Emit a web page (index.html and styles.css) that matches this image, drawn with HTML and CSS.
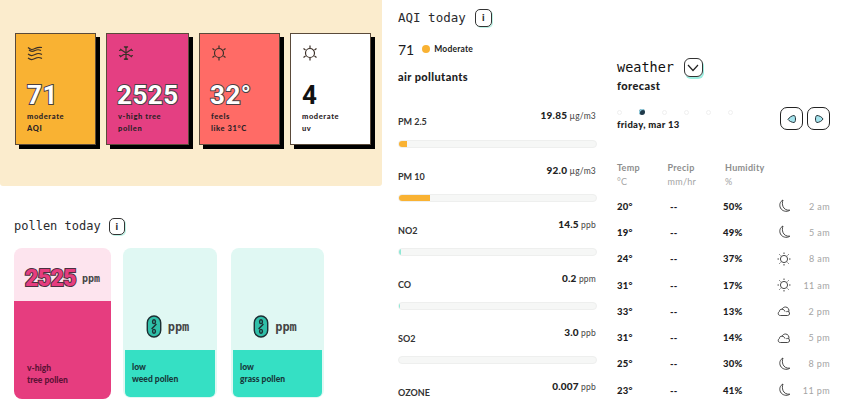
FILE: index.html
```html
<!DOCTYPE html>
<html lang="en">
<head>
    <meta charset="UTF-8">
    <meta name="viewport" content="width=device-width, initial-scale=1.0">
    <title>Air quality and weather</title>
    <link rel="stylesheet" href="styles.css">
</head>
<body>
    <svg class="defs" width="0" height="0">
        <symbol id="moon" viewBox="0 0 14 14"><path d="M6 1C3 2.500 2 6 3.500 9C5 12 9.500 13.500 12.800 11.200C9.500 11.500 7 10 6 7.500C5.200 5.500 5.200 3 6 1Z"/></symbol>
        <symbol id="sun" viewBox="0 0 14 14"><circle cx="7" cy="7" r="3.600"/><path d="M7 .5V2M7 12V13.500M.5 7H2M12 7H13.500M2.400 2.400L3.400 3.400M10.600 10.600L11.600 11.600M2.400 11.600L3.400 10.600M10.600 3.400L11.600 2.400"/></symbol>
        <symbol id="cloud" viewBox="0 0 14 14"><path d="M3.500 11.500H10.500C12.500 11.500 13.300 9 11.800 7.800C12.500 5.500 11 3 8.500 3C6.800 3 5.600 4 5 5.200C3.500 5 2.500 6 2.500 7.300C1 8 .3 11.500 3.500 11.500Z"/><path d="M5 5.200C6.500 5.300 7.800 6.300 8 7.600M11.800 7.800C11 7.300 10 7.300 9.300 7.700"/></symbol>
        <symbol id="tick" viewBox="0 0 16 24"><rect x="1" y="1" width="14" height="22" rx="7"/><path d="M5.500 14.500L10.500 9.500M8 5C6 5 6 9 8 9C10 9 10 5 8 5ZM8 15C6 15 6 19 8 19C10 19 10 15 8 15Z"/></symbol>
        <symbol id="sunny" viewBox="0 0 16 16"><path d="M3.500 8A4.500 4.500 0 1 0 12.500 8A4.500 4.500 0 1 0 3.500 8ZM8 .5V3M8 13V15.500M1.500 3.500L3.500 5M12.500 11L14.500 12.500M1.500 12.500L3.500 11M12.500 5L14.500 3.500"/></symbol>
    </svg>

    <div class="left">
        <section class="hero">
            <div class="stat yellow">
                <svg class="stat-icon" viewBox="0 0 16 16"><path d="M1 2.500C4 5 5 5 8 3.500C11 2 12 2 15 2.500M2 5C4 7 6 6.500 8 5.500C10 4.500 12 4.500 14 5.500M1 9C4 11 5 11 8 9.500C11 8 12 8 15 9.500M1 13C4 15 5 15 8 13.500C11 12 12 12 15 13.500"/></svg>
                <div class="stat-num outline">71</div>
                <div class="stat-txt">moderate<br>AQI</div>
            </div>
            <div class="stat pink wide">
                <svg class="stat-icon" viewBox="0 0 16 16"><path d="M8 1V15M2 4L14 12M2 12L14 4M8 3L6 1.500M8 3L10 1.500M8 13L6 14.500M8 13L10 14.500M3.500 5L1 5.500M12.500 11L15 10.500M3.500 11L1 10.500M12.500 5L15 5.500"/></svg>
                <div class="stat-num outline">2525</div>
                <div class="stat-txt">v-high tree<br>pollen</div>
            </div>
            <div class="stat coral">
                <svg class="stat-icon"><use href="#sunny"/></svg>
                <div class="stat-num outline">32°</div>
                <div class="stat-txt">feels<br>like 31°C</div>
            </div>
            <div class="stat white">
                <svg class="stat-icon"><use href="#sunny"/></svg>
                <div class="stat-num">4</div>
                <div class="stat-txt">moderate<br>uv</div>
            </div>
        </section>

        <section class="pollen">
            <h2 class="head">pollen today <span class="info">i</span></h2>
            <div class="pollen-cards">
                <div class="pcard tree">
                    <div class="pcard-top"><span class="pnum">2525</span> <span class="ppm small">ppm</span></div>
                    <div class="pcard-bottom">v-high<br>tree pollen</div>
                </div>
                <div class="pcard low">
                    <div class="pcard-top"><svg class="tick"><use href="#tick"/></svg><span class="ppm">ppm</span></div>
                    <div class="pcard-bottom">low<br>weed pollen</div>
                </div>
                <div class="pcard low">
                    <div class="pcard-top"><svg class="tick"><use href="#tick"/></svg><span class="ppm">ppm</span></div>
                    <div class="pcard-bottom">low<br>grass pollen</div>
                </div>
            </div>
        </section>
    </div>

    <section class="aqi">
        <h2 class="head big">AQI today <span class="info">i</span></h2>
        <div class="aqi-now"><span class="aqi-num">71</span><span class="dot"></span><span class="aqi-lbl">Moderate</span></div>
        <h3 class="sub">air pollutants</h3>

        <div class="row"><span class="name">PM 2.5</span><span class="val"><b>19.85</b> µg/m3</span></div>
        <div class="bar"><div class="fill" style="width: 4%"></div></div>
        <div class="row"><span class="name">PM 10</span><span class="val"><b>92.0</b> µg/m3</span></div>
        <div class="bar"><div class="fill" style="width: 15.500%"></div></div>
        <div class="row"><span class="name">NO2</span><span class="val"><b>14.5</b> ppb</span></div>
        <div class="bar"><div class="fill mint" style="width: 1%"></div></div>
        <div class="row"><span class="name">CO</span><span class="val"><b>0.2</b> ppm</span></div>
        <div class="bar"><div class="fill mint" style="width: 0.500%"></div></div>
        <div class="row"><span class="name">SO2</span><span class="val"><b>3.0</b> ppb</span></div>
        <div class="bar"></div>
        <div class="row"><span class="name">OZONE</span><span class="val"><b>0.007</b> ppb</span></div>
    </section>

    <section class="weather">
        <h2 class="head bigger">weather
            <span class="info chev"><svg viewBox="0 0 12 8"><path d="M1 1L6 6.500L11 1"/></svg></span>
        </h2>
        <h3 class="sub tight">forecast</h3>
        <div class="day-row">
            <div>
                <div class="dots"><i></i><i class="on"></i><i></i><i></i><i></i><i></i></div>
                <div class="date">friday, mar 13</div>
            </div>
            <div class="arrows">
                <span class="arrow"><svg viewBox="0 0 10 10"><path d="M1 5.500C2 3.500 5 1.500 7 1.500C9 1.500 9 8.500 7 8.500C5 8.500 2 7 1 5.500Z"/></svg></span>
                <span class="arrow"><svg viewBox="0 0 10 10"><path d="M9 5C8 3 5 1.500 3 1.500C1 1.500 1 8.500 3 8.500C5 8.500 8 7 9 5Z"/></svg></span>
            </div>
        </div>

        <div class="tr th"><span>Temp</span><span>Precip</span><span>Humidity</span></div>
        <div class="tr th unit"><span>°C</span><span>mm/hr</span><span>%</span></div>

        <div class="tr"><b>20°</b><b>--</b><b>50%</b><svg class="wi"><use href="#moon"/></svg><em>2 am</em></div>
        <div class="tr"><b>19°</b><b>--</b><b>49%</b><svg class="wi"><use href="#moon"/></svg><em>5 am</em></div>
        <div class="tr"><b>24°</b><b>--</b><b>37%</b><svg class="wi"><use href="#sun"/></svg><em>8 am</em></div>
        <div class="tr"><b>31°</b><b>--</b><b>17%</b><svg class="wi"><use href="#sun"/></svg><em>11 am</em></div>
        <div class="tr"><b>33°</b><b>--</b><b>13%</b><svg class="wi"><use href="#cloud"/></svg><em>2 pm</em></div>
        <div class="tr"><b>31°</b><b>--</b><b>14%</b><svg class="wi"><use href="#cloud"/></svg><em>5 pm</em></div>
        <div class="tr"><b>25°</b><b>--</b><b>30%</b><svg class="wi"><use href="#moon"/></svg><em>8 pm</em></div>
        <div class="tr"><b>23°</b><b>--</b><b>41%</b><svg class="wi"><use href="#moon"/></svg><em>11 pm</em></div>
    </section>
</body>
</html>
```

FILE: styles.css
```css
body {
    margin: 0;
    width: 847px;
    height: 407px;
    overflow: hidden;
    display: flex;
    background: #fff;
    color: #1c1c22;
    font-family: "Lato", "Liberation Sans", sans-serif;
}
.defs {
    position: absolute;
}
.left {
    width: 382px;
    flex-shrink: 0;
}

/* top stat cards */
.hero {
    height: 186px;
    box-sizing: border-box;
    padding: 33px 0 0 15px;
    background: #fbeccd;
    display: flex;
    gap: 10px;
    border-radius: 0 0 3px 3px;
}
.stat {
    width: 81px;
    height: 112px;
    box-sizing: border-box;
    padding: 11px 0 0 11px;
    border: 1px solid #5a4a3a;
    box-shadow: 4px 4px 0 #000;
}
.wide { width: 83px; }
.yellow { background: #f9b233; }
.pink { background: #e43f82; }
.coral { background: #ff6b66; }
.white { background: #fff; }
.stat-icon {
    display: block;
    width: 16px;
    height: 16px;
    fill: none;
    stroke: #3c3028;
    stroke-width: 1.200;
}
.stat-num {
    margin-top: 19px;
    font-family: "Roboto", sans-serif;
    font-weight: 700;
    font-size: 26px;
    line-height: 30px;
    letter-spacing: .5px;
    color: #111;
}
.outline {
    color: #fff;
    -webkit-text-stroke: 2px #4a4045;
    paint-order: stroke fill;
}
.stat-txt {
    margin-top: 1px;
    font-size: 7.500px;
    font-weight: 900;
    line-height: 12px;
    letter-spacing: .6px;
    color: #2b2226;
}
.pink .stat-num, .coral .stat-num {
    margin-left: -1px;
}

/* pollen */
.pollen {
    padding: 31px 0 0 14px;
}
.head {
    margin: 0;
    font-family: "DejaVu Sans Mono", monospace;
    font-weight: 400;
    font-size: 12px;
    line-height: 19px;
    color: #2a2a2e;
    display: flex;
    align-items: center;
    gap: 2px;
}
.head.big {
    font-size: 12.500px;
    gap: 3px;
}
.head.bigger {
    font-size: 13.500px;
    gap: 10px;
    color: #111;
}
.info {
    display: inline-flex;
    align-items: center;
    justify-content: center;
    width: 14px;
    height: 15px;
    margin-left: 6px;
    border: 1px solid #333;
    border-radius: 5px;
    box-shadow: 1px 1px 0 #bdf3e6;
    font-family: "Lato", sans-serif;
    font-size: 10px;
    font-weight: 900;
}
.head.big .info {
    width: 15px;
    height: 16px;
}
.chev {
    width: 17px;
    height: 17px;
    margin-left: 0;
    border-radius: 6px;
    box-shadow: 1px 2px 0 #9beee0;
}
.chev svg {
    width: 12px;
    height: 8px;
    fill: none;
    stroke: #222;
    stroke-width: 1.200;
}
.pollen-cards {
    margin-top: 12px;
    display: flex;
}
.pcard {
    height: 151px;
    display: flex;
    flex-direction: column;
    border-radius: 8px;
    overflow: hidden;
}
.tree {
    width: 97px;
    background: #fde4ee;
    margin-right: 12px;
}
.low {
    width: 94px;
    height: 150px;
    padding: 0 2px 1px;
    box-sizing: border-box;
    background: #e0f8f3;
    margin-right: 14px;
}
.low + .low {
    width: 93px;
}
.pcard-top {
    flex: 1;
    display: flex;
    align-items: center;
    justify-content: center;
    gap: 6px;
}
.tree .pcard-top {
    height: 53px;
    flex: none;
    padding-top: 8px;
    box-sizing: border-box;
}
.low .pcard-top {
    align-items: flex-end;
    padding: 0 5px 12px 0;
}
.low .ppm {
    margin-bottom: 4px;
}
.pcard-bottom {
    font-size: 8.500px;
    font-weight: 900;
    line-height: 12px;
    color: #17383a;
    padding: 11px 0 0 7px;
    height: 47px;
    box-sizing: border-box;
    background: #35e0c4;
    border-radius: 0 0 5px 5px;
}
.tree .pcard-bottom {
    flex: 1;
    background: #e63d7f;
    color: #5c1236;
    padding: 61px 0 0 13px;
    border-radius: 0;
}
.pnum {
    font-family: "Roboto", sans-serif;
    font-weight: 900;
    font-size: 23px;
    letter-spacing: -.6px;
    color: #e63d7f;
    -webkit-text-stroke: 2px #4a3040;
    paint-order: stroke fill;
}
.ppm {
    font-family: "DejaVu Sans Mono", monospace;
    font-size: 12px;
    font-weight: 700;
    color: #444;
}
.ppm.small {
    font-size: 10px;
}
.tick {
    width: 16px;
    height: 23px;
    fill: #2fbfa8;
    stroke: #1c2f33;
    stroke-width: 1.500;
}

/* AQI column */
.aqi {
    width: 199px;
    margin-left: 16px;
    padding-top: 8px;
    flex-shrink: 0;
}
.aqi-now {
    display: flex;
    align-items: center;
    margin-top: 12px;
    height: 20px;
}
.aqi-num {
    font-size: 14px;
}
.dot {
    width: 8px;
    height: 8px;
    border-radius: 50%;
    background: #f9b233;
    margin: 0 4px 0 8px;
}
.aqi-lbl {
    font-size: 8.500px;
    font-weight: 700;
    letter-spacing: .2px;
}
.sub {
    margin: 11px 0 0;
    font-size: 11px;
    font-weight: 900;
    line-height: 14px;
    letter-spacing: .4px;
}
.sub.tight {
    margin-top: 2px;
}
.row {
    height: 32px;
    display: flex;
    justify-content: space-between;
    padding: 10px 1px 0 0;
    box-sizing: border-box;
}
.sub + .row {
    margin-top: 15px;
    height: 33px;
}
.name {
    margin-top: 7px;
    font-size: 9px;
    line-height: 12px;
    font-weight: 700;
    color: #333;
}
.val {
    font-size: 8.500px;
    line-height: 12px;
    letter-spacing: .2px;
    color: #444;
}
.val b {
    font-size: 10px;
    color: #222;
    font-weight: 900;
}
.bar {
    height: 8px;
    margin-top: 8px;
    margin-bottom: 6px;
    background: #f6f7f6;
    border: 1px solid #eeefee;
    box-sizing: border-box;
    border-radius: 4px;
    overflow: hidden;
}
.fill {
    height: 100%;
    background: #f9b233;
}
.fill.mint {
    background: #8fe8d6;
}

/* weather column */
.weather {
    flex: 1;
    margin-left: 20px;
    padding: 58px 17px 0 0;
}
.day-row {
    display: flex;
    justify-content: space-between;
    margin-top: 11px;
    height: 56px;
}
.dots {
    display: flex;
    gap: 17px;
    align-items: center;
    height: 12px;
    margin-top: 2px;
}
.dots i {
    width: 5px;
    height: 5px;
    border: 1px solid #f0f0f0;
    box-sizing: border-box;
    border-radius: 50%;
}
.dots i.on {
    width: 6px;
    height: 6px;
    border: 0;
    background: #1f3a4a;
    box-shadow: inset 1px 1px 0 #9ad8ea;
}
.date {
    font-size: 9.500px;
    font-weight: 900;
    line-height: 14px;
    letter-spacing: .3px;
}
.arrows {
    display: flex;
    gap: 4px;
    margin-top: 3px;
}
.arrow {
    width: 23px;
    height: 23px;
    box-sizing: border-box;
    border: 1px solid #222;
    border-radius: 7px;
    display: flex;
    align-items: center;
    justify-content: center;
}
.arrow svg {
    width: 10px;
    height: 10px;
    fill: #a5e4ee;
    stroke: #26343a;
    stroke-width: 1;
}
.tr {
    display: grid;
    grid-template-columns: 53px 53px 54px 16px 1fr;
    align-items: center;
    height: 26.300px;
    font-size: 9.500px;
}
.tr b {
    font-weight: 900;
    letter-spacing: .3px;
}
.tr em {
    justify-self: end;
    font-style: normal;
    font-size: 9px;
    color: #a4a4a4;
    letter-spacing: .4px;
}
.wi {
    width: 14px;
    height: 14px;
    fill: none;
    stroke: #333;
    stroke-width: .9;
}
.th {
    grid-template-columns: 50.500px 57.500px 1fr;
    height: 14px;
    color: #8d8d8d;
    font-weight: 700;
    font-size: 9px;
    letter-spacing: .3px;
}
.th.unit {
    margin-bottom: 5px;
    font-weight: 400;
    color: #a4a4a4;
}
```
